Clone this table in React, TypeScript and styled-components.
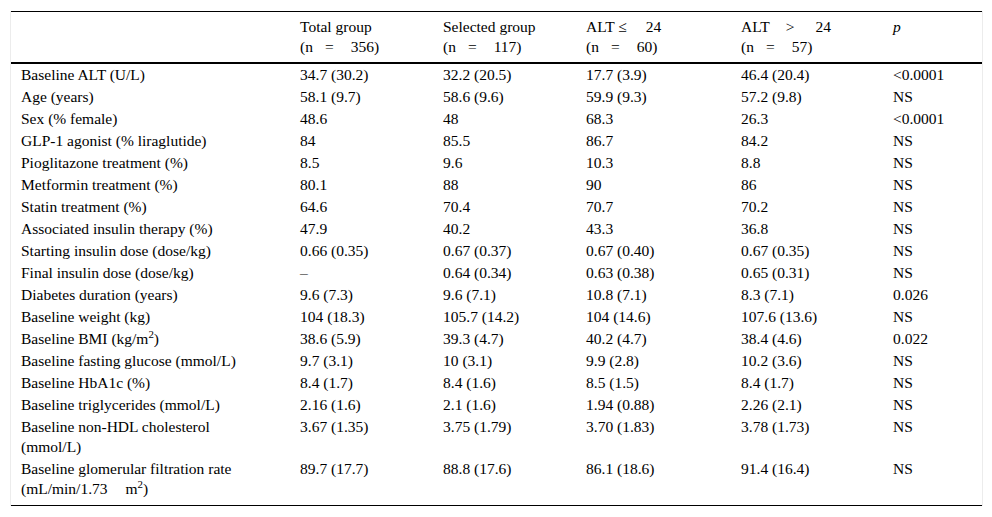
import React from "react";
import styled, { createGlobalStyle } from "styled-components";

const GlobalStyle = createGlobalStyle`
  html, body {
    margin: 0;
    padding: 0;
    background: #ffffff;
  }
  body {
    font-family: "Liberation Serif", "Times New Roman", serif;
    color: #000000;
  }
`;

const Page = styled.div`
  padding: 11px 10px 0 10px;
  width: 992px;
  box-sizing: border-box;
`;

const Table = styled.table`
  width: 971px;
  table-layout: fixed;
  border-collapse: separate;
  border-spacing: 0;
  border-left: 1px solid #ececec;
  border-right: 1px solid #ececec;
  font-family: "Liberation Serif", "Times New Roman", serif;
  font-size: 15.5px;
  line-height: 20px;
  color: #000000;
`;

const HeadCell = styled.th<{ $italic?: boolean }>`
  text-align: left;
  font-family: "Liberation Serif", "Times New Roman", serif;
  font-size: 15.5px;
  line-height: 20px;
  font-weight: normal;
  font-style: ${(p) => (p.$italic ? "italic" : "normal")};
  vertical-align: top;
  padding: 5px 10px 5px 10px;
  border-top: 1px solid #000000;
  border-bottom: 2px solid #000000;
  white-space: nowrap;
`;

const Cell = styled.td<{ $last?: boolean }>`
  font-family: "Liberation Serif", "Times New Roman", serif;
  font-size: 15.5px;
  line-height: 20px;
  vertical-align: top;
  padding: 1px 10px ${(p) => (p.$last ? "6px" : "1px")} 10px;
  border-bottom: ${(p) => (p.$last ? "1px solid #000000" : "none")};
  white-space: nowrap;
`;

const Gap = styled.span<{ $w: number }>`
  display: inline-block;
  width: ${(p) => p.$w}px;
`;

const Sup = styled.sup`
  font-size: 0.7em;
  line-height: 0;
  vertical-align: 0.55em;
`;

type RowData = { label: React.ReactNode; values: string[] };

const rows: RowData[] = [
  { label: "Baseline ALT (U/L)", values: ["34.7 (30.2)", "32.2 (20.5)", "17.7 (3.9)", "46.4 (20.4)", "<0.0001"] },
  { label: "Age (years)", values: ["58.1 (9.7)", "58.6 (9.6)", "59.9 (9.3)", "57.2 (9.8)", "NS"] },
  { label: "Sex (% female)", values: ["48.6", "48", "68.3", "26.3", "<0.0001"] },
  { label: "GLP-1 agonist (% liraglutide)", values: ["84", "85.5", "86.7", "84.2", "NS"] },
  { label: "Pioglitazone treatment (%)", values: ["8.5", "9.6", "10.3", "8.8", "NS"] },
  { label: "Metformin treatment (%)", values: ["80.1", "88", "90", "86", "NS"] },
  { label: "Statin treatment (%)", values: ["64.6", "70.4", "70.7", "70.2", "NS"] },
  { label: "Associated insulin therapy (%)", values: ["47.9", "40.2", "43.3", "36.8", "NS"] },
  { label: "Starting insulin dose (dose/kg)", values: ["0.66 (0.35)", "0.67 (0.37)", "0.67 (0.40)", "0.67 (0.35)", "NS"] },
  { label: "Final insulin dose (dose/kg)", values: ["\u2013", "0.64 (0.34)", "0.63 (0.38)", "0.65 (0.31)", "NS"] },
  { label: "Diabetes duration (years)", values: ["9.6 (7.3)", "9.6 (7.1)", "10.8 (7.1)", "8.3 (7.1)", "0.026"] },
  { label: "Baseline weight (kg)", values: ["104 (18.3)", "105.7 (14.2)", "104 (14.6)", "107.6 (13.6)", "NS"] },
  {
    label: (
      <>
        Baseline BMI (kg/m<Sup>2</Sup>)
      </>
    ),
    values: ["38.6 (5.9)", "39.3 (4.7)", "40.2 (4.7)", "38.4 (4.6)", "0.022"],
  },
  { label: "Baseline fasting glucose (mmol/L)", values: ["9.7 (3.1)", "10 (3.1)", "9.9 (2.8)", "10.2 (3.6)", "NS"] },
  { label: "Baseline HbA1c (%)", values: ["8.4 (1.7)", "8.4 (1.6)", "8.5 (1.5)", "8.4 (1.7)", "NS"] },
  { label: "Baseline triglycerides (mmol/L)", values: ["2.16 (1.6)", "2.1 (1.6)", "1.94 (0.88)", "2.26 (2.1)", "NS"] },
  {
    label: (
      <>
        Baseline non-HDL cholesterol
        <br />
        (mmol/L)
      </>
    ),
    values: ["3.67 (1.35)", "3.75 (1.79)", "3.70 (1.83)", "3.78 (1.73)", "NS"],
  },
  {
    label: (
      <>
        Baseline glomerular filtration rate
        <br />
        (mL/min/1.73
        <Gap $w={18} />m<Sup>2</Sup>)
      </>
    ),
    values: ["89.7 (17.7)", "88.8 (17.6)", "86.1 (18.6)", "91.4 (16.4)", "NS"],
  },
];

const colWidths = [279, 143, 143, 155, 152, 99];

const Count = ({ n }: { n: string }) => (
  <>
    (n<Gap $w={12} />=<Gap $w={17} />
    {n})
  </>
);

export default function App() {
  return (
    <Page>
      <GlobalStyle />
      <Table>
        <colgroup>
          {colWidths.map((w, i) => (
            <col key={i} style={{ width: w }} />
          ))}
        </colgroup>
        <thead>
          <tr>
            <HeadCell />
            <HeadCell>
              Total group
              <br />
              <Count n="356" />
            </HeadCell>
            <HeadCell>
              Selected group
              <br />
              <Count n="117" />
            </HeadCell>
            <HeadCell>
              ALT ≤<Gap $w={19} />24
              <br />
              <Count n="60" />
            </HeadCell>
            <HeadCell>
              ALT<Gap $w={16} />&gt;<Gap $w={21} />24
              <br />
              <Count n="57" />
            </HeadCell>
            <HeadCell $italic>p</HeadCell>
          </tr>
        </thead>
        <tbody>
          {rows.map((r, i) => {
            const last = i === rows.length - 1;
            return (
              <tr key={i}>
                <Cell $last={last}>{r.label}</Cell>
                {r.values.map((v, j) => (
                  <Cell key={j} $last={last}>
                    {v}
                  </Cell>
                ))}
              </tr>
            );
          })}
        </tbody>
      </Table>
    </Page>
  );
}
